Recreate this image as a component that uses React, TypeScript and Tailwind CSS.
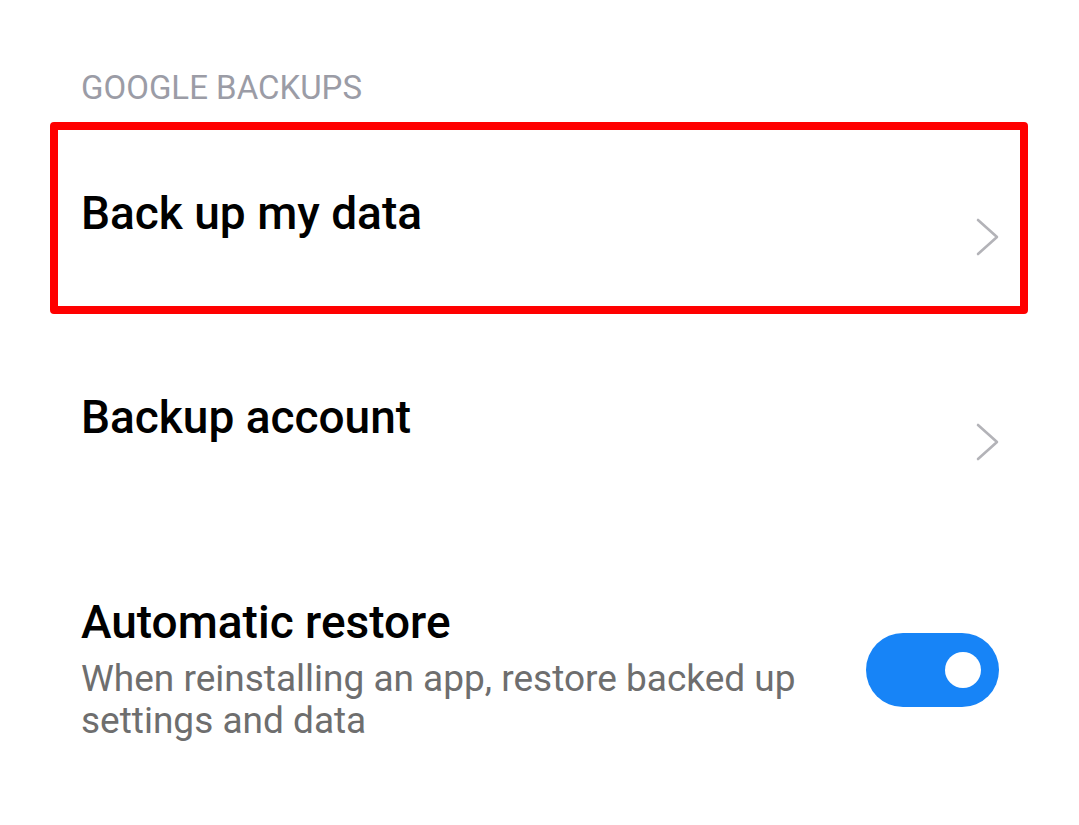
const Chevron = () => (
    <svg width="28" height="42" viewBox="0 0 28 42" fill="none" className="shrink-0">
        <path d="M4 4 L23 21 L4 38" stroke="#b3b3b8" strokeWidth="2.6" strokeLinecap="round" strokeLinejoin="round" />
    </svg>
);

const Toggle = ({ on }: { on: boolean }) => (
    <div className={`flex h-[74px] w-[133px] shrink-0 items-center rounded-full px-[18px] ${on ? "justify-end bg-[#1784f7]" : "justify-start bg-[#d9d9de]"}`}>
        <div className="size-[36px] rounded-full bg-white" />
    </div>
);

export default function App() {
    return (
        <div className="min-h-screen bg-white font-['Roboto',sans-serif]">
            <p className="pl-[81px] pt-[70px] text-[33px] leading-[36px] text-[#9b9ca6]">GOOGLE BACKUPS</p>

            {/* highlighted row */}
            <div className="ml-[50px] mt-[16px] flex h-[192px] w-[978px] items-start justify-between rounded-[4px] border-[8px] border-[#ff0000] pl-[23px] pr-[18px] pt-[60px]">
                <p className="text-[46px] font-medium leading-[46px] text-black">Back up my data</p>
                <div className="mt-[26px]">
                    <Chevron />
                </div>
            </div>

            <div className="flex h-[210px] items-start justify-between pl-[81px] pr-[77px] pt-[80px]">
                <p className="text-[46px] font-medium leading-[46px] text-black">Backup account</p>
                <div className="mt-[27px]">
                    <Chevron />
                </div>
            </div>

            <div className="flex items-center justify-between pl-[81px] pr-[80px] pt-[74px]">
                <div className="flex w-[750px] flex-col">
                    <p className="text-[46px] font-medium leading-[48px] text-black">Automatic restore</p>
                    <p className="mt-[12px] text-[37px] leading-[42px] text-[#6e6e6e]">
                        When reinstalling an app, restore backed up settings and data
                    </p>
                </div>
                <Toggle on />
            </div>
        </div>
    );
}
